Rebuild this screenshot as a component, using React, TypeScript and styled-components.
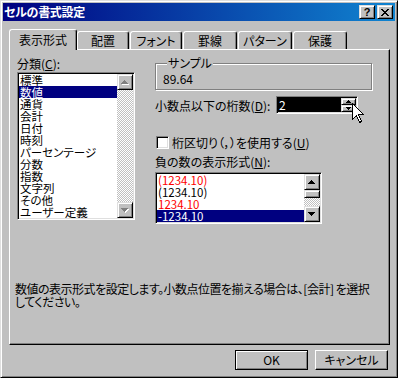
import React from 'react';
import styled, { createGlobalStyle } from 'styled-components';

const FACE = '#c0c0c0';
const LIGHT = '#dfdfdf';
const SHADOW = '#808080';
const NAVY = '#000080';

const GlobalStyle = createGlobalStyle`
    html, body {
        margin: 0;
        padding: 0;
        background: ${FACE};
    }
    body {
        font-family: "Noto Sans CJK JP", "Noto Sans", sans-serif;
        font-size: 12px;
        font-feature-settings: "palt";
        color: #000;
    }
    * {
        box-sizing: border-box;
    }
`;

const categories = ['標準', '数値', '通貨', '会計', '日付', '時刻', 'パーセンテージ', '分数', '指数', '文字列', 'その他', 'ユーザー定義'];

const negatives = [
    { text: '(1234.10)', red: true },
    { text: '(1234.10)', red: false },
    { text: '1234.10', red: true },
    { text: '-1234.10', red: false, selected: true },
];

const tabs = [
    { label: '表示形式', width: 68 },
    { label: '配置', width: 52 },
    { label: 'フォント', width: 52 },
    { label: '罫線', width: 54 },
    { label: 'パターン', width: 54 },
    { label: '保護', width: 54 },
];

const ARROW_UP = 'M3 0h1v1h-1z M2 1h3v1h-3z M1 2h5v1h-5z M0 3h7v1h-7z';
const ARROW_DOWN = 'M0 0h7v1h-7z M1 1h5v1h-5z M2 2h3v1h-3z M3 3h1v1h-1z';
const SPIN_UP = 'M2 0h1v1h-1z M1 1h3v1h-3z M0 2h5v1h-5z';
const SPIN_DOWN = 'M0 0h5v1h-5z M1 1h3v1h-3z M2 2h1v1h-1z';

const Arrow: React.FC<{ dir: 'up' | 'down'; disabled?: boolean }> = ({ dir, disabled }) => {
    const d = dir === 'up' ? ARROW_UP : ARROW_DOWN;
    return (
        <svg width="8" height="5" viewBox="0 0 8 5" shapeRendering="crispEdges">
            {disabled && <path d={d} fill="#fff" transform="translate(1 1)" />}
            <path d={d} fill={disabled ? SHADOW : '#000'} />
        </svg>
    );
};

const SpinArrow: React.FC<{ dir: 'up' | 'down' }> = ({ dir }) => (
    <svg width="5" height="3" viewBox="0 0 5 3" shapeRendering="crispEdges">
        <path d={dir === 'up' ? SPIN_UP : SPIN_DOWN} fill="#000" />
    </svg>
);

const CloseGlyph = () => (
    <svg width="8" height="7" viewBox="0 0 8 7" shapeRendering="crispEdges">
        <path
            d="M0 0h2v1h-2z M6 0h2v1h-2z M1 1h2v1h-2z M5 1h2v1h-2z M2 2h4v1h-4z M3 3h2v1h-2z M2 4h4v1h-4z M1 5h2v1h-2z M5 5h2v1h-2z M0 6h2v1h-2z M6 6h2v1h-2z"
            fill="#000"
        />
    </svg>
);

const Cursor = () => (
    <svg width="13" height="20" viewBox="0 0 13 20" shapeRendering="crispEdges">
        <polygon
            points="0.5,0.5 0.5,16.5 4.5,12.5 7.5,19.5 9.5,18.5 6.5,11.5 11.5,11.5"
            fill="#fff"
            stroke="#000"
            strokeWidth="1"
        />
    </svg>
);

const App: React.FC = () => {
    return (
        <>
            <GlobalStyle />
            <Window>
                <TitleBar>
                    <Title>セルの書式設定</Title>
                    <CaptionButtons>
                        <CaptionButton>
                            <HelpGlyph>?</HelpGlyph>
                        </CaptionButton>
                        <CaptionButton>
                            <CloseGlyph />
                        </CaptionButton>
                    </CaptionButtons>
                </TitleBar>
                <Body>
                    <TabRow>
                        {tabs.map((tab, i) => (
                            <Tab key={tab.label} $active={i === 0} $width={tab.width}>
                                {tab.label}
                            </Tab>
                        ))}
                    </TabRow>
                    <Panel>
                        <Columns>
                            <LeftColumn>
                                <FieldLabel>
                                    分類(<u>C</u>):
                                </FieldLabel>
                                <ListBox $width={118} $height={148}>
                                    <ListItems>
                                        {categories.map((c) => (
                                            <ListItem key={c} $selected={c === '数値'}>
                                                {c}
                                            </ListItem>
                                        ))}
                                    </ListItems>
                                    <ScrollBar>
                                        <ScrollButton>
                                            <Arrow dir="up" disabled />
                                        </ScrollButton>
                                        <ScrollTrack />
                                        <ScrollButton>
                                            <Arrow dir="down" disabled />
                                        </ScrollButton>
                                    </ScrollBar>
                                </ListBox>
                            </LeftColumn>
                            <RightColumn>
                                <GroupBox>
                                    <GroupLegend>サンプル</GroupLegend>
                                    <SampleValue>89.64</SampleValue>
                                </GroupBox>
                                <DigitsRow>
                                    <DigitsLabel>
                                        小数点以下の桁数(<u>D</u>):
                                    </DigitsLabel>
                                    <SpinBox>
                                        <SpinField>2</SpinField>
                                        <SpinButtons>
                                            <SpinButton>
                                                <SpinArrow dir="up" />
                                            </SpinButton>
                                            <SpinButton>
                                                <SpinArrow dir="down" />
                                            </SpinButton>
                                        </SpinButtons>
                                        <CursorLayer>
                                            <Cursor />
                                        </CursorLayer>
                                    </SpinBox>
                                </DigitsRow>
                                <CheckRow>
                                    <CheckBox />
                                    <CheckLabel>
                                        桁区切り（，）を使用する(<u>U</u>)
                                    </CheckLabel>
                                </CheckRow>
                                <NegativeLabel>
                                    負の数の表示形式(<u>N</u>):
                                </NegativeLabel>
                                <ListBox $width={167} $height={52}>
                                    <ListItems>
                                        {negatives.map((n, i) => (
                                            <ListItem key={i} $selected={!!n.selected} $red={n.red}>
                                                {n.text}
                                            </ListItem>
                                        ))}
                                    </ListItems>
                                    <ScrollBar>
                                        <ScrollButton>
                                            <Arrow dir="up" />
                                        </ScrollButton>
                                        <ScrollThumb />
                                        <ScrollTrack />
                                        <ScrollButton>
                                            <Arrow dir="down" />
                                        </ScrollButton>
                                    </ScrollBar>
                                </ListBox>
                            </RightColumn>
                        </Columns>
                        <Description>
                            数値の表示形式を設定します。小数点位置を揃える場合は、[会計] を選択
                            <br />
                            してください。
                        </Description>
                    </Panel>
                    <ButtonRow>
                        <PushButton $default>OK</PushButton>
                        <PushButton>キャンセル</PushButton>
                    </ButtonRow>
                </Body>
            </Window>
        </>
    );
};

const raised = `
    border: 1px solid;
    border-color: ${LIGHT} #000 #000 ${LIGHT};
    box-shadow: inset 1px 1px #fff, inset -1px -1px ${SHADOW};
`;

const sunken = `
    border: 1px solid;
    border-color: ${SHADOW} #fff #fff ${SHADOW};
    box-shadow: inset 1px 1px #000, inset -1px -1px ${LIGHT};
`;

const Window = styled.div`
    width: 398px;
    height: 378px;
    background: ${FACE};
    border: 1px solid;
    border-color: ${LIGHT} #000 #000 ${LIGHT};
    box-shadow: inset 1px 1px #fff, inset -1px -1px ${SHADOW};
    padding: 2px;
    display: flex;
    flex-direction: column;
`;

const TitleBar = styled.div`
    height: 18px;
    display: flex;
    align-items: center;
    padding: 0 2px 0 1px;
    background: linear-gradient(to right, ${NAVY}, #1084d0);
`;

const Title = styled.div`
    flex: 1;
    color: #fff;
    font-weight: 700;
    font-size: 12px;
    line-height: 18px;
    letter-spacing: -0.3px;
    white-space: nowrap;
`;

const CaptionButtons = styled.div`
    display: flex;
    gap: 2px;
`;

const CaptionButton = styled.div`
    width: 16px;
    height: 14px;
    background: ${FACE};
    ${raised}
    display: flex;
    align-items: center;
    justify-content: center;
`;

const HelpGlyph = styled.span`
    font-family: "Liberation Sans", Arial, sans-serif;
    font-weight: 700;
    font-size: 11px;
    line-height: 11px;
`;

const Body = styled.div`
    flex: 1;
    display: flex;
    flex-direction: column;
    padding: 8px 5px 0 6px;
`;

const TabRow = styled.div`
    display: flex;
    align-items: flex-end;
    gap: 1px;
`;

const Tab = styled.div<{ $active: boolean; $width: number }>`
    position: relative;
    width: ${(p) => p.$width}px;
    height: ${(p) => (p.$active ? 21 : 18)}px;
    margin-bottom: ${(p) => (p.$active ? -1 : 0)}px;
    margin-right: ${(p) => (p.$active ? -1 : 0)}px;
    z-index: ${(p) => (p.$active ? 1 : 0)};
    background: ${FACE};
    border-top: 1px solid #fff;
    border-left: 1px solid #fff;
    border-right: 1px solid #000;
    border-radius: 3px 3px 0 0;
    box-shadow: inset -1px 0 ${SHADOW};
    text-align: center;
    padding-top: ${(p) => (p.$active ? 3 : 2)}px;
    line-height: 13px;
    white-space: nowrap;
`;

const Panel = styled.div`
    width: 381px;
    height: 296px;
    background: ${FACE};
    border: 1px solid;
    border-color: #fff #000 #000 #fff;
    box-shadow: inset -1px -1px ${SHADOW};
    padding: 8px 16px 36px 7px;
    display: flex;
    flex-direction: column;
`;

const Columns = styled.div`
    display: flex;
    gap: 20px;
`;

const LeftColumn = styled.div`
    display: flex;
    flex-direction: column;
    width: 118px;
`;

const RightColumn = styled.div`
    display: flex;
    flex-direction: column;
    width: 217px;
`;

const FieldLabel = styled.div`
    line-height: 12px;
    margin-bottom: 2px;
    white-space: nowrap;
`;

const ListBox = styled.div<{ $width: number; $height: number }>`
    width: ${(p) => p.$width}px;
    height: ${(p) => p.$height}px;
    background: #fff;
    ${sunken}
    padding: 1px;
    display: flex;
`;

const ListItems = styled.div`
    flex: 1;
    min-width: 0;
    display: flex;
    flex-direction: column;
    overflow: hidden;
`;

const ListItem = styled.div<{ $selected: boolean; $red?: boolean }>`
    height: 12px;
    font-size: 11.5px;
    line-height: 12px;
    padding-left: 1px;
    white-space: nowrap;
    background: ${(p) => (p.$selected ? NAVY : 'transparent')};
    color: ${(p) => (p.$selected ? '#fff' : p.$red ? '#ff0000' : '#000')};
`;

const ScrollBar = styled.div`
    width: 16px;
    display: flex;
    flex-direction: column;
`;

const ScrollButton = styled.div`
    width: 16px;
    height: 16px;
    background: ${FACE};
    ${raised}
    display: flex;
    align-items: center;
    justify-content: center;
`;

const ScrollThumb = styled.div`
    width: 16px;
    height: 8px;
    background: ${FACE};
    ${raised}
`;

const ScrollTrack = styled.div`
    flex: 1;
    background-image: conic-gradient(#fff 25%, ${FACE} 0 50%, #fff 0 75%, ${FACE} 0);
    background-size: 2px 2px;
`;

const GroupBox = styled.fieldset`
    margin: -1px 0 0 0;
    min-width: 0;
    width: 217px;
    padding: 3px 7px 3px 7px;
    border: 1px solid ${SHADOW};
    box-shadow: 1px 1px 0 #fff, inset 1px 1px 0 #fff;
`;

const GroupLegend = styled.legend`
    margin-left: 4px;
    padding: 0 1px;
    line-height: 12px;
    background: ${FACE};
`;

const SampleValue = styled.div`
    line-height: 14px;
`;

const DigitsRow = styled.div`
    display: flex;
    align-items: center;
    margin-top: 6px;
`;

const DigitsLabel = styled.div`
    width: 121px;
    line-height: 13px;
    white-space: nowrap;
`;

const SpinBox = styled.div`
    position: relative;
    width: 82px;
    height: 18px;
    background: #fff;
    ${sunken}
    padding: 1px;
    display: flex;
`;

const SpinField = styled.div`
    flex: 1;
    background: #000;
    color: #fff;
    line-height: 14px;
    padding-left: 1px;
`;

const SpinButtons = styled.div`
    width: 15px;
    display: flex;
    flex-direction: column;
`;

const SpinButton = styled.div`
    flex: 1;
    background: ${FACE};
    ${raised}
    display: flex;
    align-items: center;
    justify-content: center;
`;

const CursorLayer = styled.div`
    position: absolute;
    left: 75px;
    top: 6px;
    line-height: 0;
`;

const CheckRow = styled.div`
    display: flex;
    align-items: center;
    gap: 3px;
    margin-top: 22px;
    padding-left: 1px;
`;

const CheckBox = styled.div`
    width: 13px;
    height: 13px;
    background: #fff;
    ${sunken}
`;

const CheckLabel = styled.div`
    line-height: 13px;
    white-space: nowrap;
`;

const NegativeLabel = styled.div`
    margin-top: 7px;
    margin-bottom: 4px;
    line-height: 12px;
    white-space: nowrap;
`;

const Description = styled.div`
    margin-top: auto;
    margin-left: -2px;
    line-height: 13px;
    letter-spacing: -0.5px;
    white-space: nowrap;
`;

const ButtonRow = styled.div`
    display: flex;
    justify-content: flex-end;
    gap: 7px;
    margin-top: 5px;
    padding-right: 2px;
`;

const PushButton = styled.div<{ $default?: boolean }>`
    width: 73px;
    height: 20px;
    background: ${FACE};
    border: 1px solid;
    border-color: ${(p) => (p.$default ? '#000' : '#fff #000 #000 #fff')};
    box-shadow: ${(p) =>
        p.$default ? `inset 1px 1px #fff, inset -1px -1px ${SHADOW}` : `inset -1px -1px ${SHADOW}`};
    display: flex;
    align-items: center;
    justify-content: center;
    line-height: 12px;
`;

export default App;
